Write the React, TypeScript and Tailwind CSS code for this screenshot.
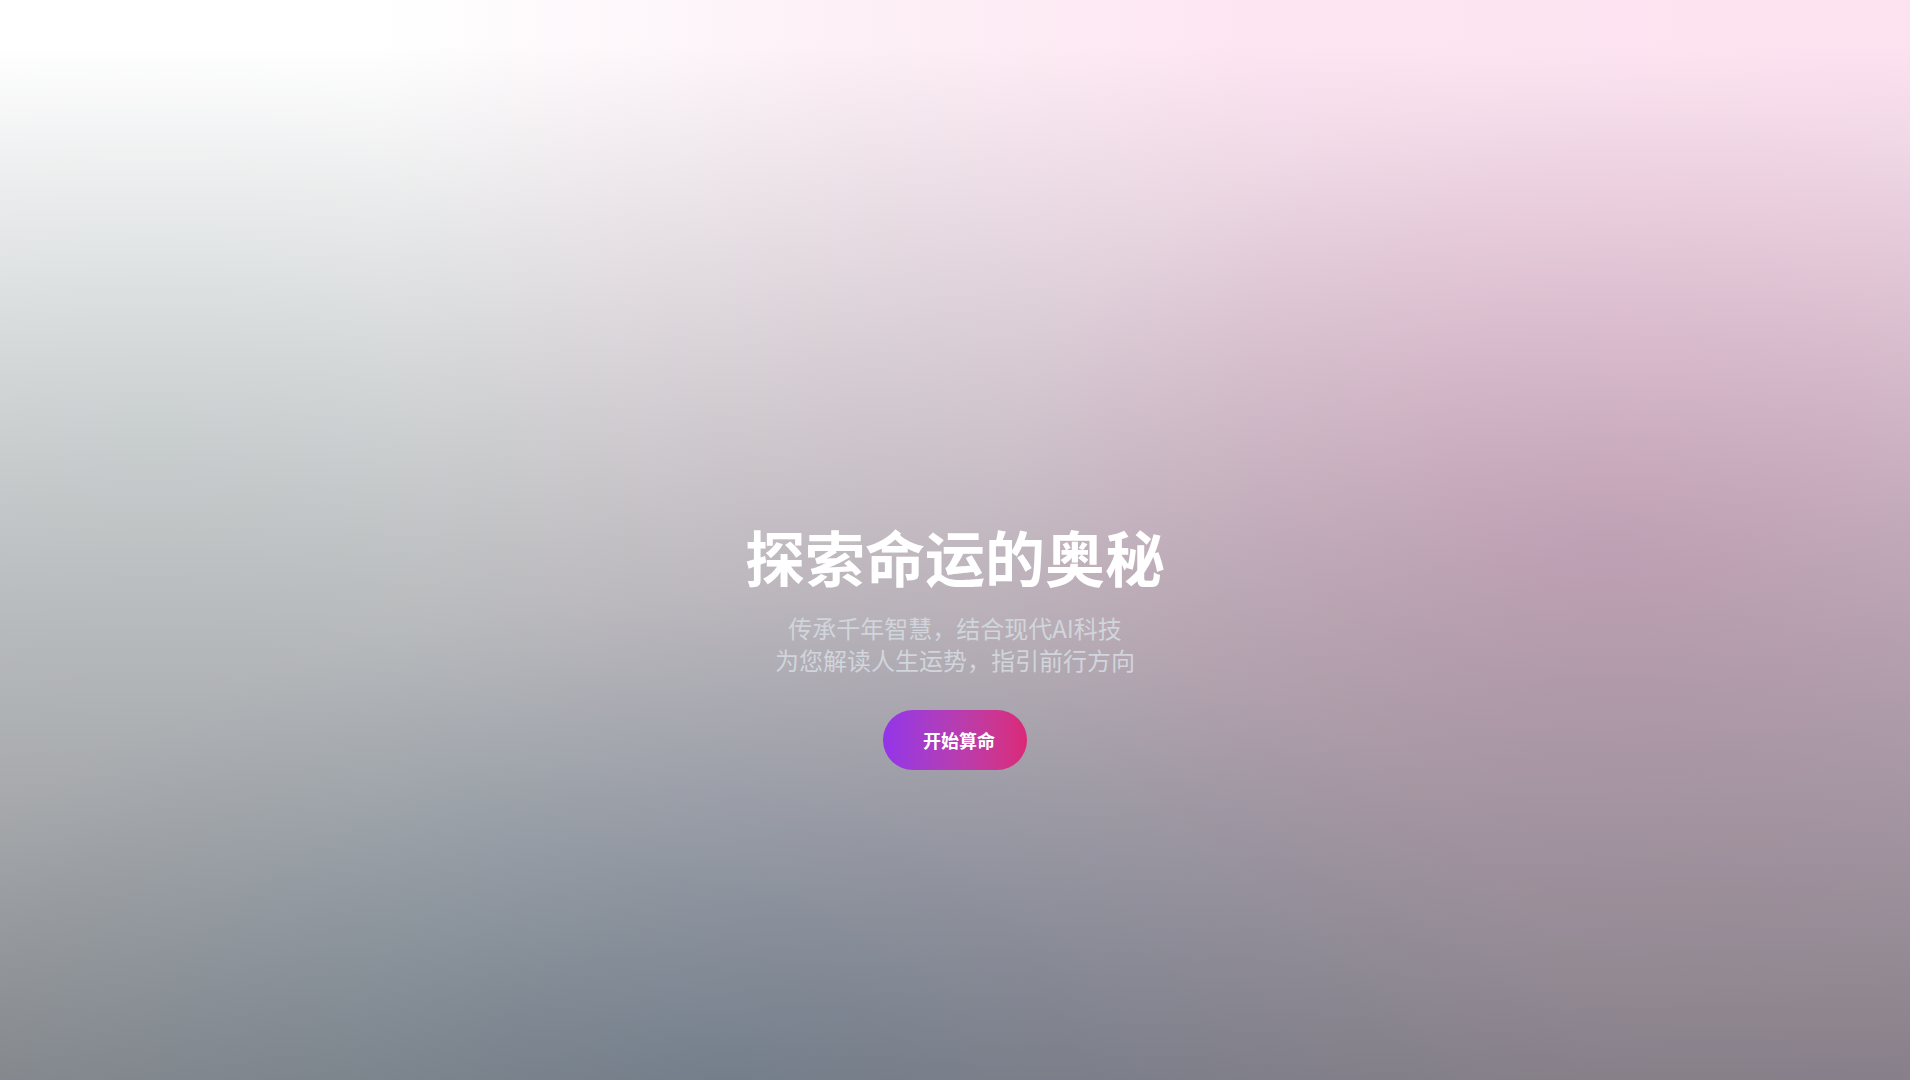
function Hero() {
  return (
    <section className="relative h-screen flex-1 overflow-hidden bg-[image:linear-gradient(180deg,rgba(56,61,68,0)_0%,rgba(56,61,68,0)_4%,rgba(56,61,68,0.3)_50%,rgba(56,61,68,0.6)_100%),radial-gradient(ellipse_45%_45%_at_38%_100%,rgba(160,205,240,0.5),rgba(160,205,240,0)),radial-gradient(ellipse_32%_42%_at_84%_50%,rgba(244,165,210,0.38),rgba(244,165,210,0)),radial-gradient(ellipse_25%_35%_at_8%_40%,rgba(210,235,232,0.2),rgba(210,235,232,0)),linear-gradient(90deg,#ffffff_0%,#ffffff_20%,#fdf0f7_45%,#fde6f2_65%,#fde2f0_100%)]">
      <div className="flex h-full flex-col items-center pt-[526px] text-center">
        <h1 className="mb-[26px] text-6xl leading-none font-bold text-white">
          探索命运的奥秘
        </h1>
        <p className="text-2xl text-gray-300">
          传承千年智慧，结合现代AI科技
          <br />
          为您解读人生运势，指引前行方向
        </p>
        <button className="mt-[34px] rounded-full bg-linear-to-r from-[#9333ea] to-[#db2777] py-4 pr-8 pl-10 text-lg font-semibold text-white">
          开始算命
        </button>
      </div>
    </section>
  );
}

export default function App() {
  return (
    <div className="flex h-screen bg-white pr-[10px] font-['Noto_Sans_CJK_SC','Noto_Sans',sans-serif]">
      <Hero />
    </div>
  );
}
